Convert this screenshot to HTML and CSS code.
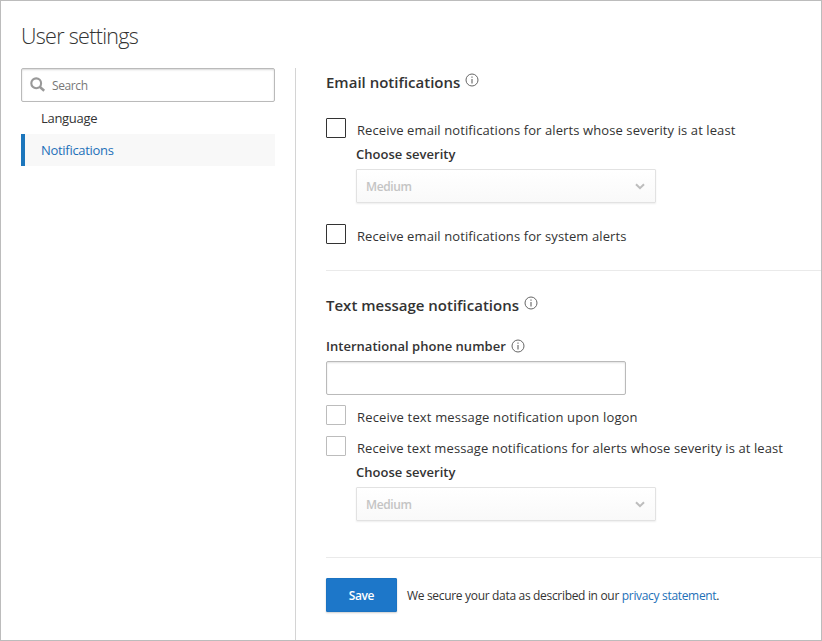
FILE: index.html
```html
<!DOCTYPE html>
<html lang="en">
<head>
<meta charset="utf-8">
<title>User settings</title>
<link rel="stylesheet" href="styles.css">
</head>
<body>
<svg width="0" height="0" class="defs">
  <symbol id="info" viewBox="0 0 14 14"><circle cx="7" cy="7" r="6" fill="none" stroke="#666" stroke-width="1"/><path d="M6.5 3.5h1v1.2h-1zM6.5 6h1v4.5h-1z" fill="#555"/></symbol>
  <symbol id="chevron" viewBox="0 0 10 7"><path d="M1 1.2l4 4 4-4" fill="none" stroke="#bdbdbd" stroke-width="2"/></symbol>
</svg>
<div class="page">
  <h1 class="title"><span>User settings</span></h1>
  <div class="body">
    <nav class="sidebar">
      <div class="search">
        <svg class="search-icon" viewBox="0 0 16 16"><circle cx="6.2" cy="6.3" r="4.9" fill="none" stroke="#999" stroke-width="2.1"/><path d="M9.7 9.8l4.5 4" stroke="#999" stroke-width="2.5"/></svg>
        <span class="search-text">Search</span>
      </div>
      <a class="nav">Language</a>
      <a class="nav nav-active">Notifications</a>
    </nav>
    <main class="content">
      <section class="email">
        <h2 class="heading"><span>Email notifications</span><svg class="info"><use href="#info"/></svg></h2>
        <label class="check"><i class="box box-dark"></i><span>Receive email notifications for alerts whose severity is at least</span></label>
        <div class="severity">
          <div class="label">Choose severity</div>
          <div class="select"><span>Medium</span><svg class="chevron"><use href="#chevron"/></svg></div>
        </div>
        <label class="check check-second"><i class="box box-dark"></i><span>Receive email notifications for system alerts</span></label>
      </section>
      <section class="text">
        <h2 class="heading"><span>Text message notifications</span><svg class="info"><use href="#info"/></svg></h2>
        <div class="phone-label"><span>International phone number</span><svg class="info info-small"><use href="#info"/></svg></div>
        <div class="input"></div>
        <label class="check check-logon-row"><i class="box"></i><span class="check-logon">Receive text message notification upon logon</span></label>
        <label class="check check-text-row"><i class="box"></i><span>Receive text message notifications for alerts whose severity is at least</span></label>
        <div class="severity">
          <div class="label">Choose severity</div>
          <div class="select"><span>Medium</span><svg class="chevron"><use href="#chevron"/></svg></div>
        </div>
      </section>
      <footer class="footer">
        <button class="save">Save</button>
        <p class="privacy">We secure your data as described in our <a>privacy statement</a>.</p>
      </footer>
    </main>
  </div>
</div>
</body>
</html>
```
FILE: styles.css
```css
* { box-sizing: border-box; }
body { margin: 0; background: #fff; color: #333; font: 13px/20px "Open Sans", "Noto Sans", sans-serif; overflow: hidden; }
.defs { position: absolute; }
.page { width: 822px; height: 641px; border: 1px solid #bcbcbc; display: flex; flex-direction: column; white-space: nowrap; }
.title { margin: 0; padding: 15px 0 0 20px; height: 67px; font-size: 21.5px; line-height: 40px; font-weight: 300; letter-spacing: -0.7px; color: #333; }
.body { flex: 1; display: flex; }
.sidebar { width: 294px; padding-left: 20px; }
.search { width: 254px; height: 34px; border: 1px solid #bababa; border-radius: 2px; box-shadow: inset 0 1px 2px rgba(0,0,0,.16); display: flex; align-items: center; padding-left: 8px; }
.search-icon { width: 16px; height: 16px; }
.search-text { margin-left: 6px; padding-top: 2px; font-size: 12px; color: #777; letter-spacing: -0.4px; }
.nav { display: flex; align-items: center; width: 254px; height: 32px; padding-left: 20px; letter-spacing: -0.3px; }
.nav-active { background: #f8f8f8; border-left: 4px solid #1c76bc; padding-left: 16px; color: #1d70b8; }
.content { flex: 1; border-left: 1px solid #d4d4d4; padding-left: 30px; }
.heading { margin: 0; height: 28px; display: flex; align-items: center; font-size: 15px; font-weight: 600; letter-spacing: 0; }
.info { width: 14px; height: 14px; margin: -4px 0 0 5px; }
.info-small { margin-top: 0; }
.check { display: flex; height: 20px; letter-spacing: 0.1px; }
.check span { margin: 2px 0 0 11px; }
.check .check-logon { letter-spacing: 0.16px; }
.box { width: 20px; height: 20px; border: 1px solid #bcbcbc; border-radius: 1px; }
.box-dark { border-color: #333; }
.email { height: 203px; border-bottom: 1px solid #eaeaea; }
.email > .check { margin-top: 22px; }
.email > .check-second { margin-top: 21px; }
.severity { margin-left: 30px; padding-top: 6px; }
.label, .phone-label { display: flex; align-items: center; height: 20px; font-weight: 600; letter-spacing: 0.02px; }
.select { margin-top: 5px; width: 300px; height: 34px; border: 1px solid #e2e2e2; border-radius: 1px; background: linear-gradient(#fff, #f9f9f9); box-shadow: 0 1px 2px rgba(0,0,0,.07); display: flex; align-items: center; justify-content: space-between; padding: 0 10px 0 9px; color: #c4c4c4; font-size: 12px; font-weight: 600; letter-spacing: -0.4px; }
.select span { padding-top: 2px; }
.chevron { width: 10px; height: 7px; }
.text { height: 287px; padding-top: 20px; border-bottom: 1px solid #eaeaea; }
.phone-label { margin-top: 17px; }
.input { margin-top: 5px; width: 300px; height: 34px; border: 1px solid #bababa; border-radius: 2px; box-shadow: inset 0 1px 2px rgba(0,0,0,.12); }
.check-logon-row { margin-top: 10px; }
.check-text-row { margin-top: 11px; }
.footer { display: flex; align-items: center; padding-top: 20px; font-size: 12px; }
.save { width: 71px; height: 34px; padding: 2px 0 0; border: 1px solid #1b73c2; border-radius: 1px; background: #1d77c9; color: #fff; font: 600 12px/20px "Open Sans", "Noto Sans", sans-serif; letter-spacing: -0.4px; box-shadow: 0 1px 2px rgba(0,0,0,.2); }
.privacy { margin: 0 0 0 10px; padding-top: 2px; letter-spacing: -0.32px; }
.privacy a { color: #1d70b8; }
```
